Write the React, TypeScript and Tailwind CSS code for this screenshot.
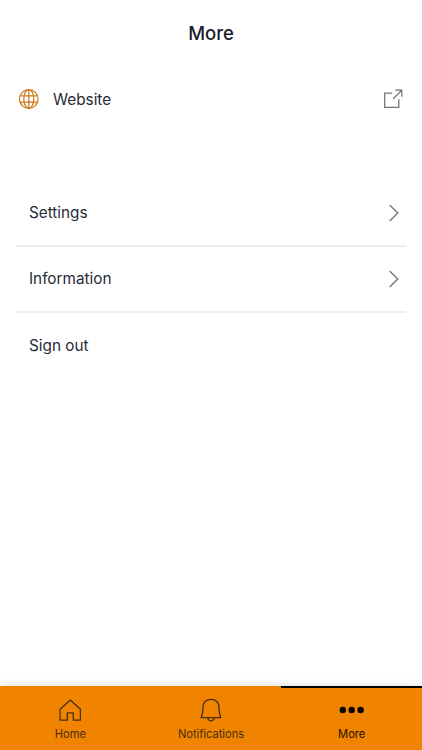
import type { ReactNode } from 'react';

const menuItems = [
  { label: 'Settings', hasArrow: true },
  { label: 'Information', hasArrow: true },
  { label: 'Sign out', hasArrow: false },
];

function GlobeIcon() {
  return (
    <svg width="20" height="20" viewBox="0 0 20 20" fill="none" stroke="#cb7a1c" strokeWidth="1.25">
      <circle cx="9.8" cy="10" r="9.3" />
      <ellipse cx="9.8" cy="10" rx="5" ry="9.3" />
      <path d="M9.8 .7v18.6M1.3 6.9h17M1.3 13.1h17" />
    </svg>
  );
}

function ExternalIcon() {
  return (
    <svg width="20" height="20" viewBox="0 0 20 20" fill="none" stroke="#737780" strokeWidth="1.3">
      <path d="M9.2 4.2H1.7v14.1h14.1v-8" />
      <path d="M10.2 9.8L18.8 1.2M12.2 1.2h6.6v6.6" />
    </svg>
  );
}

function ChevronIcon() {
  return (
    <svg width="10" height="18" viewBox="0 0 10 18" fill="none" stroke="#737780" strokeWidth="1.4">
      <path d="M.7 .9L8.8 9L.7 17.1" />
    </svg>
  );
}

function HomeIcon() {
  return (
    <svg width="22" height="22" viewBox="0 0 22 22" fill="none" stroke="#49300f" strokeWidth="1.3" strokeLinejoin="round">
      <path d="M1.1 10.3L11.3 .9l10.1 9.4v10.9H14.3v-7.3H8.3v7.3H1.1z" />
    </svg>
  );
}

function BellIcon() {
  return (
    <svg width="22" height="24" viewBox="0 0 22 24" fill="none" stroke="#49300f" strokeWidth="1.3" strokeLinejoin="round">
      <path d="M11 1.4C6.3 1.4 3 4.6 3 9.1c0 5.2-.4 7.6-1.9 10.5h19.8c-1.5-2.9-1.9-5.3-1.9-10.5 0-4.5-3.3-7.7-8-7.7z" />
      <path d="M7.7 19.7c.4 2 1.5 3.2 3.3 3.2s2.9-1.2 3.3-3.2" />
    </svg>
  );
}

function DotsIcon() {
  return (
    <svg width="26" height="8" viewBox="0 0 26 8" fill="#080300">
      <circle cx="3.8" cy="4" r="3.2" />
      <circle cx="12.7" cy="4" r="3.2" />
      <circle cx="21.6" cy="4" r="3.2" />
    </svg>
  );
}

function Tab({ label, icon, active = false }: { label: string; icon: ReactNode; active?: boolean }) {
  return (
    <button
      className={`flex flex-1 flex-col items-center border-t-2 ${
        active ? 'border-black text-[#1c1000]' : 'border-[#f08300] text-[#49300f]'
      }`}
    >
      <span className="mt-2.5 flex h-6 items-center justify-center">{icon}</span>
      <span className="mt-1 text-[11.1px] leading-4">{label}</span>
    </button>
  );
}

export default function App() {
  return (
    <div className="flex h-screen flex-col bg-white font-['Inter',sans-serif] text-[#272a37]">
      <header className="flex h-[66px] items-center justify-center pt-0.5">
        <h1 className="text-[18.5px] font-medium text-[#1b1c2b]">More</h1>
      </header>

      <main className="flex-1">
        <a className="flex h-[66px] items-center px-[19px]">
          <GlobeIcon />
          <span className="ml-3.5 flex-1 pt-0.5 text-[15.3px]">Website</span>
          <ExternalIcon />
        </a>

        <ul className="mx-4 mt-[49px] divide-y-2 divide-[#ededee]">
          {menuItems.map((item) => (
            <li key={item.label} className="flex h-[66px] items-center justify-between pr-[7px] pl-[13px] text-[15.3px]">
              {item.label}
              {item.hasArrow && <ChevronIcon />}
            </li>
          ))}
        </ul>
      </main>

      <nav className="flex h-16 bg-[#f08300] shadow-[0_-1px_8px_rgba(0,0,0,0.12)]">
        <Tab label="Home" icon={<HomeIcon />} />
        <Tab label="Notifications" icon={<BellIcon />} />
        <Tab label="More" icon={<DotsIcon />} active />
      </nav>
    </div>
  );
}
